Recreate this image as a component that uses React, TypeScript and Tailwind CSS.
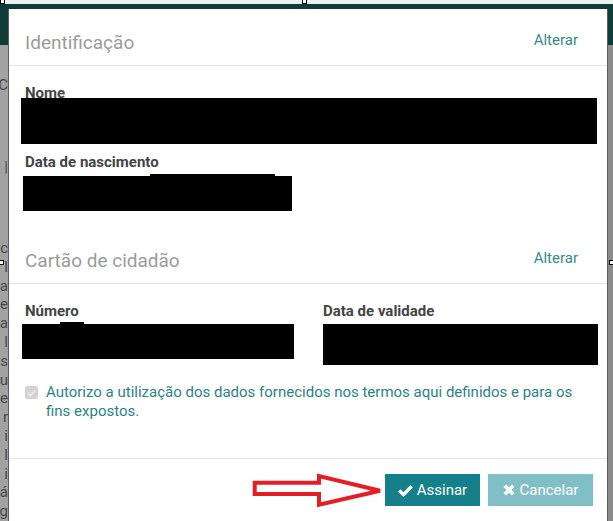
const edgeLetters = ['c', 'l', 'a', 'e', 'a', 'l', 's', 'u', 'e', 'r', 'i', 'l', 'i', 'á', 'g'];

function SectionHeader({ title }: { title: string }) {
  return (
    <div className="flex h-[57px] justify-between border-b border-[#e5e5e5] pl-4 pr-[29px]">
      <h4 className="mt-[22px] text-[19px] leading-6 font-normal text-[#9b9b9b]">{title}</h4>
      <a className="mt-[21px] text-[15px] leading-5 text-[#358b8b]">Alterar</a>
    </div>
  );
}

function Label({ children, className = '' }: { children: string; className?: string }) {
  return <div className={`text-[15px] leading-5 font-bold text-[#444] ${className}`}>{children}</div>;
}

function CheckIcon() {
  return (
    <svg width="15" height="13" viewBox="0 0 15 13" fill="none">
      <path d="M1.3 6.5 L5.5 10.6 L13.7 2.2" stroke="white" strokeWidth="3.4" />
    </svg>
  );
}

function TimesIcon() {
  return (
    <svg width="12" height="12" viewBox="0 0 12 12" fill="none">
      <path d="M1.8 1.8 L10.2 10.2 M10.2 1.8 L1.8 10.2" stroke="white" strokeWidth="3.6" />
    </svg>
  );
}

function Handle({ className }: { className: string }) {
  return <div className={`absolute h-[5px] w-[5px] border border-black bg-white ${className}`} />;
}

export default function App() {
  return (
    <div className="relative h-[521px] w-[613px] overflow-hidden bg-[#9a9a9a] font-['Roboto',sans-serif]">
      {/* page behind the overlay */}
      <div className="h-[4px] bg-[#e8f1f0]" />
      <div className="h-[41px] bg-[#0f3b39]" />
      <div className="flex h-[476px] justify-between">
        <div className="flex w-[8px] flex-col overflow-hidden bg-[#a2a2a2] text-[15px] text-[#474747]">
          <div className="mt-[30px] flex justify-end leading-5">C</div>
          <div className="mt-[62px] flex justify-end leading-5">|</div>
          <div className="mt-[62px] flex flex-col leading-[18.8px]">
            {edgeLetters.map((l, i) => (
              <div key={i} className="flex justify-end whitespace-nowrap">{l}</div>
            ))}
          </div>
        </div>
        <div className="w-[6px] bg-[#8c8c8c]" />
      </div>

      {/* modal */}
      <div className="absolute left-[8px] top-[9px] w-[600px] border-x border-[#5c5c5c] bg-white">
        <SectionHeader title="Identificação" />
        <div className="pt-[17px] pb-[16px] pl-4">
          <Label>Nome</Label>
          <div className="-mt-[5px] -ml-[4px] h-[46px] w-[576px] bg-black" />
          <Label className="mt-[8px]">Data de nascimento</Label>
          <div className="mt-[2px] ml-[125px] h-[2px] w-[125px] bg-black" />
          <div className="-ml-[2px] h-[35px] w-[269px] bg-black" />
        </div>

        <SectionHeader title="Cartão de cidadão" />
        <div className="pt-[17px] pb-[38px] pl-4">
          <div className="grid grid-cols-[298px_1fr]">
            <div>
              <Label>Número</Label>
              <div className="mt-[1px] ml-[35px] h-[2px] w-[24px] bg-black" />
              <div className="-ml-[3px] h-[35px] w-[272px] bg-black" />
            </div>
            <div>
              <Label>Data de validade</Label>
              <div className="mt-[3px] h-[41px] w-[275px] bg-black" />
            </div>
          </div>
          <label className="mt-[18px] flex items-start gap-2 pr-4">
            <span className="mt-[3px] flex h-[13px] w-[13px] shrink-0 items-center justify-center rounded-[2px] bg-[#d3d3d3]">
              <svg width="9" height="8" viewBox="0 0 9 8" fill="none">
                <path d="M1 4 L3.5 6.5 L8 1.5" stroke="#ececec" strokeWidth="1.8" />
              </svg>
            </span>
            <span className="text-[15px] leading-[18.5px] text-[#2b8383]">
              Autorizo a utilização dos dados fornecidos nos termos aqui definidos e para os fins expostos.
            </span>
          </label>
        </div>

        <div className="flex justify-end gap-2 border-t border-[#e5e5e5] pt-[15px] pb-[15px] pr-[14px]">
          <button className="flex h-[32px] w-[95px] items-center justify-center gap-[4px] bg-[#15808a] text-[15px] text-white">
            <CheckIcon />
            Assinar
          </button>
          <button className="flex h-[32px] w-[105px] items-center justify-center gap-[5px] bg-[#80bfc5] text-[15px] text-white">
            <TimesIcon />
            Cancelar
          </button>
        </div>
      </div>

      {/* red annotation arrow */}
      <svg className="absolute left-[248px] top-[468px]" width="140" height="44" viewBox="0 0 140 44" fill="none">
        <path
          d="M6.7 14.7 L71 14.7 L71 8 L132 22.7 L71 36.7 L71 26 L6.7 26 Z"
          stroke="#e31e24"
          strokeWidth="4"
          fill="white"
        />
      </svg>

      {/* screenshot selection handles */}
      <Handle className="left-0 top-[-1px]" />
      <Handle className="left-[302px] top-[-1px]" />
      <Handle className="left-[-1px] top-[260px]" />
      <Handle className="left-[609px] top-[260px]" />
    </div>
  );
}
